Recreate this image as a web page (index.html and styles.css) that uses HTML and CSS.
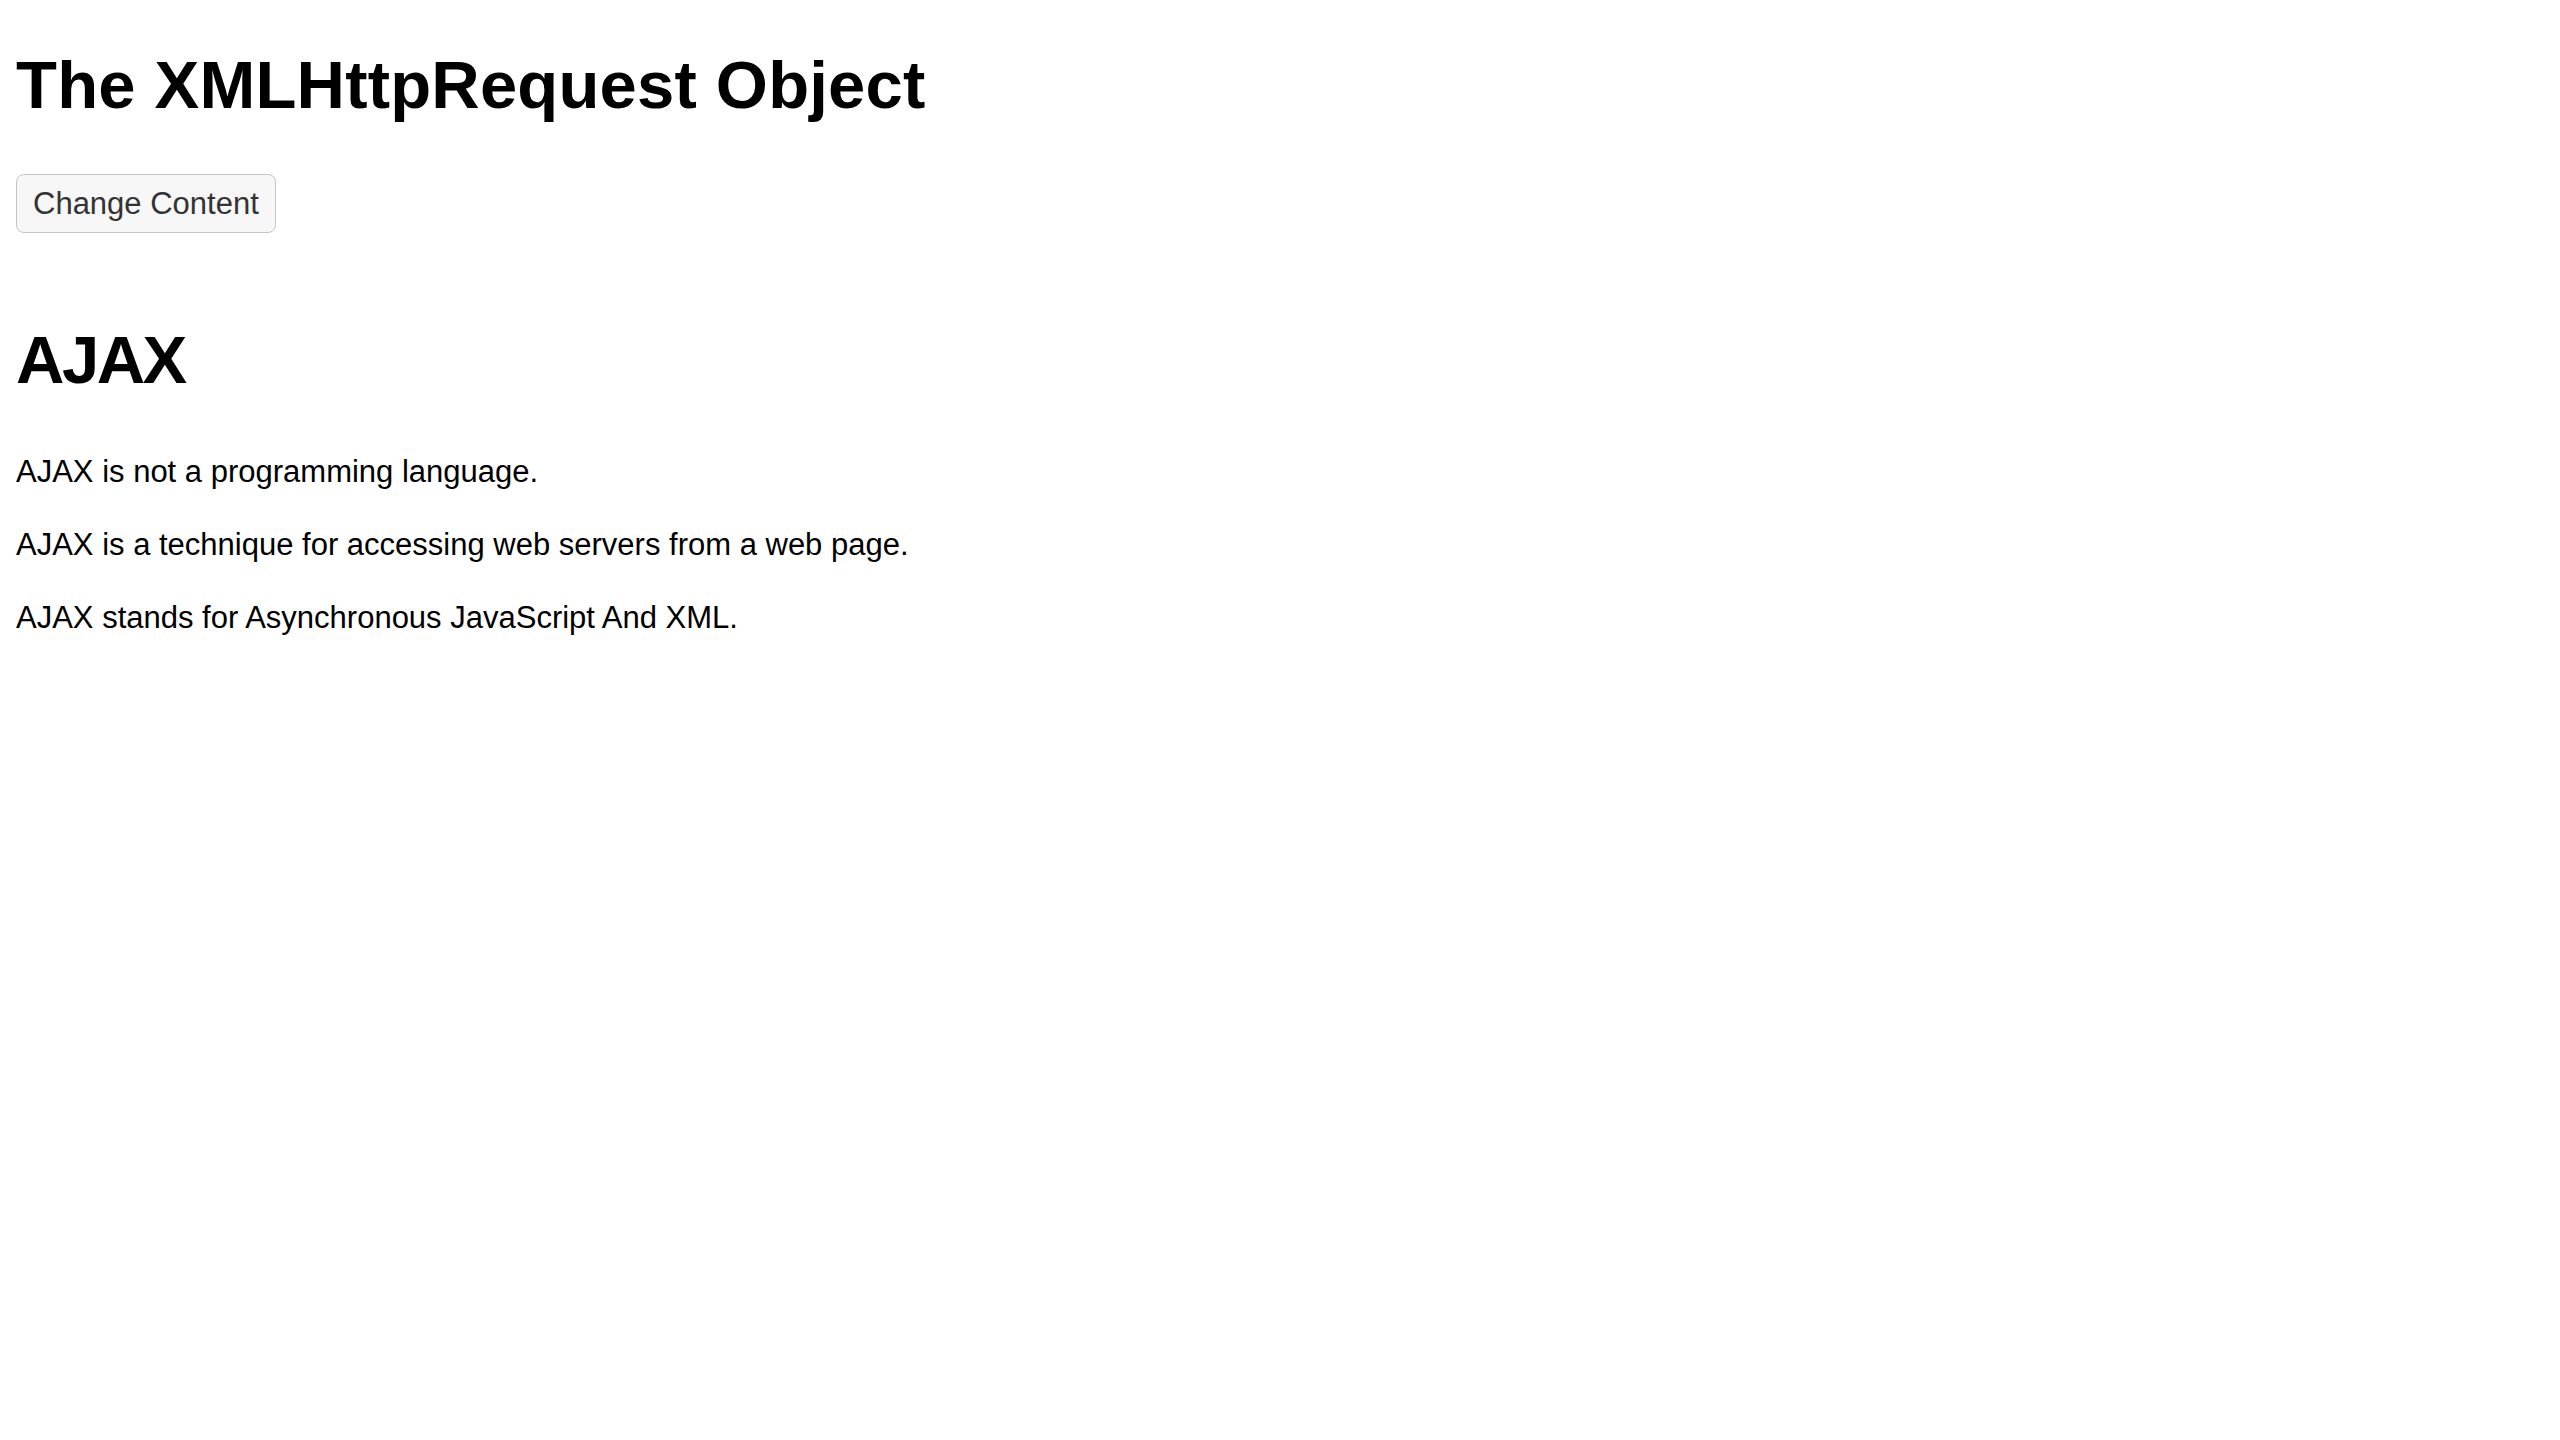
FILE: index.html
```html
<!DOCTYPE html>
<html lang="en">
<head>
<meta charset="utf-8">
<title>The XMLHttpRequest Object</title>
<link rel="stylesheet" href="styles.css">
</head>
<body>
<div class="page">
  <div class="demo">
    <h1 class="title title--wide">The XMLHttpRequest Object</h1>
    <button type="button" class="btn">Change Content</button>
  </div>
  <div class="content">
    <h1 class="title title--tight">AJAX</h1>
    <p class="text">AJAX is not a programming language.</p>
    <p class="text">AJAX is a technique for accessing web servers from a web page.</p>
    <p class="text">AJAX stands for Asynchronous JavaScript And XML.</p>
  </div>
</div>
</body>
</html>
```

FILE: styles.css
```css
html, body {
  margin: 0;
  padding: 0;
  background: #ffffff;
}

body {
  font-family: "Liberation Sans", Arial, sans-serif;
  color: #000000;
}

.page {
  padding: 46px 16px 0;
}

.title {
  font-size: 67px;
  line-height: 77px;
  font-weight: 700;
  margin: 0 0 51px;
}

.title--wide {
  letter-spacing: 0.2px;
}

.title--tight {
  letter-spacing: -2.5px;
  margin-bottom: 54px;
}

.btn {
  display: block;
  font-family: "Liberation Sans", Arial, sans-serif;
  font-size: 31px;
  line-height: 37px;
  color: #333333;
  background: #f7f7f7;
  border: 1.5px solid #c4c4c4;
  border-radius: 8px;
  padding: 10px 16px;
  margin: 0;
}

.content {
  margin-top: 88px;
}

.text {
  font-size: 31px;
  line-height: 40px;
  margin: 0 0 33px;
}
```
